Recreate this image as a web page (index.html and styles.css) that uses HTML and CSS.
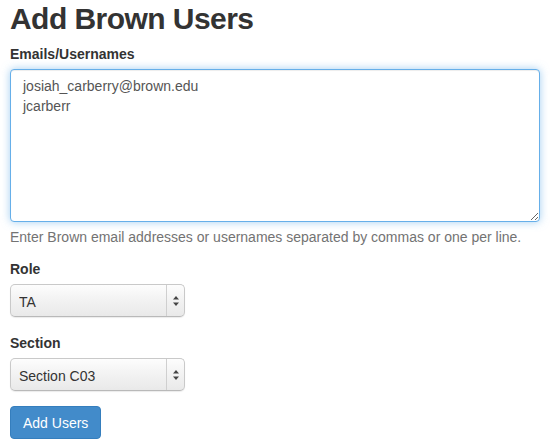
FILE: index.html
```html
<!DOCTYPE html>
<html lang="en">
<head>
<meta charset="utf-8">
<title>Add Brown Users</title>
<link rel="stylesheet" href="styles.css">
</head>
<body>
<div class="page">
  <h1 class="title">Add Brown Users</h1>
  <form class="form">
    <div class="group group-emails">
      <label class="label" for="emails">Emails/Usernames</label>
      <textarea id="emails" class="textarea">josiah_carberry@brown.edu
jcarberr</textarea>
      <p class="help">Enter Brown email addresses or usernames separated by commas or one per line.</p>
    </div>
    <div class="group">
      <label class="label" for="role">Role</label>
      <div class="select-wrap">
        <select id="role" class="select"><option>TA</option></select>
        <span class="select-arrows"><svg width="8" height="12" viewBox="0 0 8 12"><path d="M4 1 L7 4.5 H1 Z" fill="#444"/><path d="M4 11 L7 7.5 H1 Z" fill="#444"/></svg></span>
      </div>
    </div>
    <div class="group">
      <label class="label" for="section">Section</label>
      <div class="select-wrap">
        <select id="section" class="select"><option>Section C03</option></select>
        <span class="select-arrows"><svg width="8" height="12" viewBox="0 0 8 12"><path d="M4 1 L7 4.5 H1 Z" fill="#444"/><path d="M4 11 L7 7.5 H1 Z" fill="#444"/></svg></span>
      </div>
    </div>
    <button type="button" class="btn">Add Users</button>
  </form>
</div>
</body>
</html>
```

FILE: styles.css
```css
* { box-sizing: border-box; }
html, body {
  margin: 0;
  padding: 0;
  background: #fff;
}
body {
  font-family: "Liberation Sans", Arial, Helvetica, sans-serif;
  font-size: 14px;
  line-height: 20px;
  color: #333;
}
.page {
  padding: 0 12px 0 10px;
}
.title {
  margin: 2px 0 9px;
  font-size: 30px;
  line-height: 33px;
  font-weight: bold;
  letter-spacing: -0.55px;
  color: #333;
}
.form {
  margin: 0;
}
.group {
  margin-bottom: 16px;
}
.group-emails {
  margin-bottom: 12px;
}
.label {
  display: block;
  font-weight: bold;
  margin-bottom: 5px;
  line-height: 20px;
}
.textarea {
  display: block;
  width: 100%;
  height: 153px;
  margin: 0;
  padding: 6px 12px;
  font-family: "Liberation Sans", Arial, Helvetica, sans-serif;
  font-size: 14px;
  line-height: 20px;
  color: #555;
  background: #fff;
  border: 1px solid #66afe9;
  border-radius: 4px;
  outline: 0;
  resize: vertical;
  box-shadow: inset 0 1px 1px rgba(0,0,0,.075), 0 0 8px rgba(102,175,233,.6);
}
.help {
  margin: 5px 0 0;
  color: #737373;
}
.select-wrap {
  position: relative;
  width: 175px;
  height: 33px;
}
.select {
  -webkit-appearance: none;
  appearance: none;
  display: block;
  width: 100%;
  height: 33px;
  margin: 0;
  padding: 3px 24px 0 8px;
  font-family: "Liberation Sans", Arial, Helvetica, sans-serif;
  font-size: 14px;
  color: #333;
  border: 1px solid #c9c9c9;
  border-bottom-color: #b9b9b9;
  border-radius: 5px;
  background: linear-gradient(to bottom, #fdfdfd 0%, #f3f3f3 45%, #e9e9e9 100%);
  box-shadow: 0 1px 1px rgba(0,0,0,.08);
  outline: 0;
}
.select-arrows {
  position: absolute;
  top: 1px;
  right: 1px;
  bottom: 1px;
  width: 18px;
  border-left: 1px solid #cfcfcf;
  display: flex;
  align-items: center;
  justify-content: center;
  pointer-events: none;
}
.btn {
  display: inline-block;
  margin: -1px 0 0;
  padding: 6px 12px;
  height: 33px;
  font-family: "Liberation Sans", Arial, Helvetica, sans-serif;
  font-size: 14px;
  line-height: 20px;
  color: #fff;
  background: #428bca;
  border: 1px solid #357ebd;
  border-radius: 4px;
  cursor: pointer;
}
```
